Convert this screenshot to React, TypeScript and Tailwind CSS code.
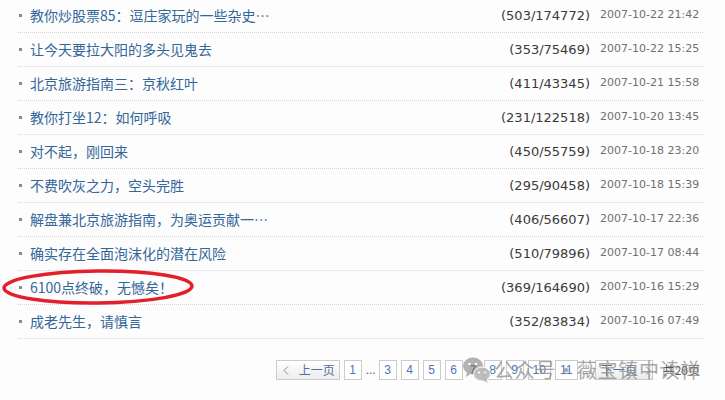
import React from "react";

const rows = [
  ["教你炒股票85：逗庄家玩的一些杂史…", "(503/174772)", "2007-10-22 21:42"],
  ["让今天要拉大阳的多头见鬼去", "(353/75469)", "2007-10-22 15:25"],
  ["北京旅游指南三：京秋红叶", "(411/43345)", "2007-10-21 15:58"],
  ["教你打坐12：如何呼吸", "(231/122518)", "2007-10-20 13:45"],
  ["对不起，刚回来", "(450/55759)", "2007-10-18 23:20"],
  ["不费吹灰之力，空头完胜", "(295/90458)", "2007-10-18 15:39"],
  ["解盘兼北京旅游指南，为奥运贡献一…", "(406/56607)", "2007-10-17 22:36"],
  ["确实存在全面泡沫化的潜在风险", "(510/79896)", "2007-10-17 08:44"],
  ["6100点终破，无憾矣！", "(369/164690)", "2007-10-16 15:29"],
  ["成老先生，请慎言", "(352/83834)", "2007-10-16 07:49"],
];

const cjk = "font-['SimSun','Noto_Sans_CJK_SC',sans-serif]";

function Box({ children, wide }: { children: React.ReactNode; wide?: boolean }) {
  return (
    <span
      className={`flex h-[20px] ${wide ? "w-[23px]" : "w-[18px]"} items-center justify-center border border-[#cccccc] bg-white text-[12px] text-[#4a78b5] font-['Liberation_Sans',Arial,sans-serif]`}
    >
      {children}
    </span>
  );
}

export default function App() {
  return (
    <div className="relative h-[400px] w-[725px] overflow-hidden bg-[#fdfdfd]">
      <div className="ml-[18px] mr-[22px] -mt-[1px]">
        {rows.map(([t, c, d], i) => (
          <div
            key={i}
            className="flex h-[34px] items-center border-b border-dotted border-[#d4d4d4]"
          >
            <span className="ml-[1px] h-[3px] w-[3px] bg-[#8a8a8a]" />
            <span className={`ml-[8px] text-[14px] text-[#336699] ${cjk}`}>{t}</span>
            <span className="flex-1 text-right text-[13px] text-[#3a3a3a] font-['DejaVu_Sans',Verdana,sans-serif]">
              {c}
            </span>
            <span className="ml-[10px] w-[103px] whitespace-nowrap text-[11px] text-[#707070] font-['DejaVu_Sans',Verdana,sans-serif]">
              {d}
            </span>
          </div>
        ))}
      </div>

      <div className="mt-[21px] flex items-center justify-end gap-[4px] pr-[25px]">
        <span
          className={`flex h-[20px] w-[64px] items-center whitespace-nowrap border border-[#cccccc] bg-gradient-to-b from-white to-[#ececec] pl-[6px] text-[12px] text-[#5a6c99] ${cjk}`}
        >
          <svg width="6" height="9" viewBox="0 0 6 9" className="mr-[10px]">
            <path d="M5 0.5 L1 4.5 L5 8.5" fill="none" stroke="#7a88aa" strokeWidth="1" />
          </svg>
          上一页
        </span>
        <Box>1</Box>
        <span className="w-[9px] text-[12px] text-[#555] font-['Liberation_Sans',Arial,sans-serif]">...</span>
        <Box>3</Box>
        <Box>4</Box>
        <Box>5</Box>
        <Box>6</Box>
        <span className="w-[13px] text-center text-[13px] font-bold text-[#333] font-['Liberation_Sans',Arial,sans-serif]">7</span>
        <Box>8</Box>
        <Box>9</Box>
        <Box wide>10</Box>
        <Box wide>11</Box>
        <span className="w-[9px] text-[12px] text-[#555] font-['Liberation_Sans',Arial,sans-serif]">...</span>
        <span
          className={`flex h-[20px] w-[58px] items-center whitespace-nowrap border border-[#cccccc] bg-gradient-to-b from-white to-[#ececec] pl-[5px] text-[12px] text-[#5a6c99] ${cjk}`}
        >
          下一页
          <svg width="6" height="9" viewBox="0 0 6 9" className="ml-[8px]">
            <path d="M1 0.5 L5 4.5 L1 8.5" fill="none" stroke="#7a88aa" strokeWidth="1" />
          </svg>
        </span>
        <span className={`ml-[6px] whitespace-nowrap text-[12px] text-[#555] ${cjk}`}>共20页</span>
      </div>

      {/* red ellipse annotation */}
      <svg
        className="pointer-events-none absolute left-0 top-[266px]"
        width="200"
        height="42"
        viewBox="0 0 200 42"
      >
        <ellipse
          cx="98"
          cy="21"
          rx="94"
          ry="16"
          fill="none"
          stroke="#e3202a"
          strokeWidth="3.5"
          transform="rotate(-0.6 98 21)"
        />
      </svg>

      {/* watermark */}
      <div className="pointer-events-none absolute left-[462px] top-[355px] flex items-center opacity-75">
        <svg width="30" height="28" viewBox="0 0 30 28">
          <ellipse cx="11" cy="10" rx="10" ry="8.5" fill="#9a9a9a" />
          <path d="M5 16 L4 21 L9 17.5 Z" fill="#9a9a9a" />
          <circle cx="7.5" cy="8" r="1.3" fill="#fdfdfd" />
          <circle cx="14" cy="8" r="1.3" fill="#fdfdfd" />
          <ellipse cx="20" cy="18" rx="8.5" ry="7" fill="#a8a8a8" stroke="#fdfdfd" strokeWidth="1" />
          <path d="M24 23 L26 27 L21 24.5 Z" fill="#a8a8a8" />
          <circle cx="17" cy="16.5" r="1.1" fill="#fdfdfd" />
          <circle cx="23" cy="16.5" r="1.1" fill="#fdfdfd" />
        </svg>
        <span className={`ml-[2px] text-[20px] tracking-[0.7px] text-[#8c8c8c] ${cjk}`}>
          公众号・薇宝镇中读禅
        </span>
      </div>
    </div>
  );
}
